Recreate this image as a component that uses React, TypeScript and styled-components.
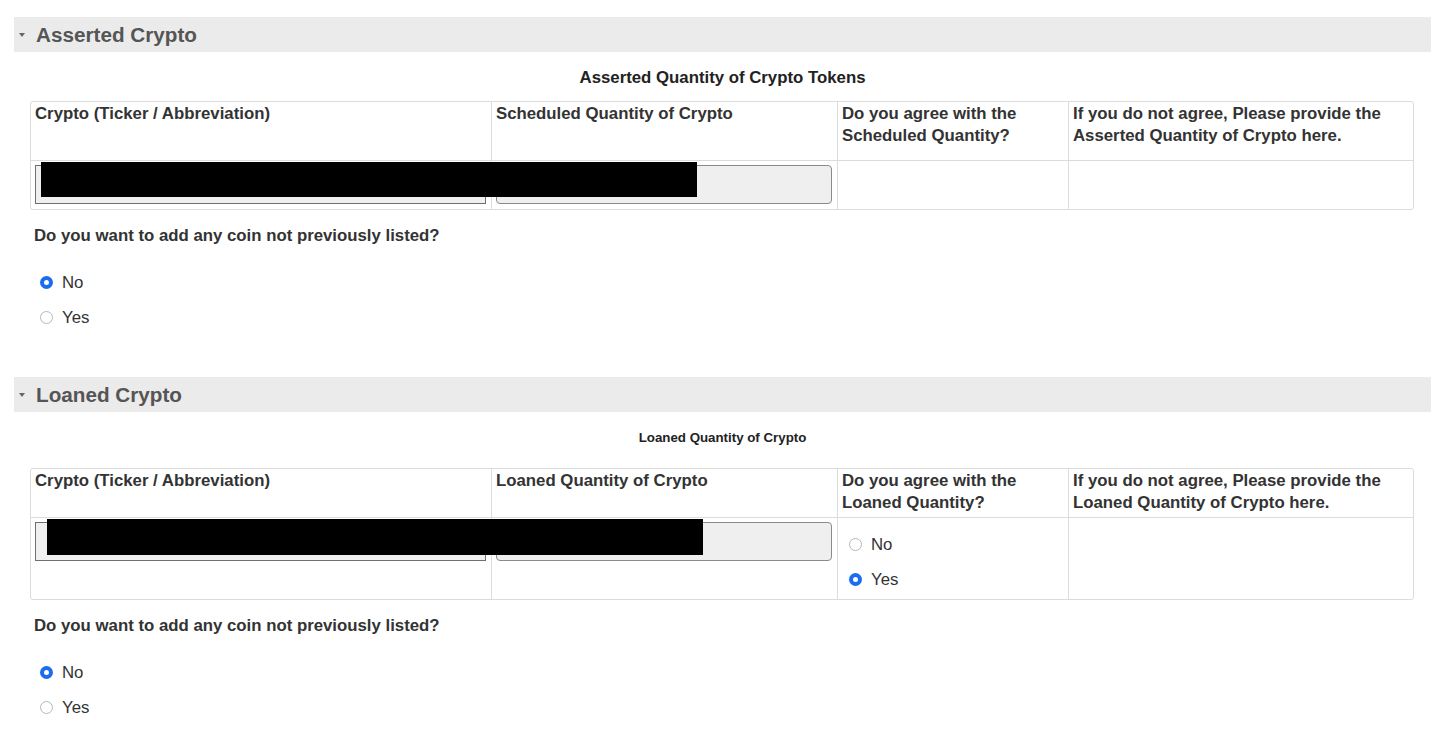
import React from "react";
import styled, { createGlobalStyle } from "styled-components";

const Global = createGlobalStyle`
  html, body { margin: 0; padding: 0; background: #fff; }
  body { font-family: "Liberation Sans", Arial, Helvetica, sans-serif; color: #333; }
  * { box-sizing: border-box; }
`;

const Page = styled.div`
  padding: 17px 11px 20px 14px;
  display: flex;
  flex-direction: column;
`;

const SectionHeader = styled.div<{ $top?: number }>`
  height: 35px;
  background: #ebebeb;
  display: flex;
  align-items: center;
  margin-top: ${(p) => p.$top ?? 0}px;
  padding-left: 5px;
`;

const Caret = styled.span`
  width: 0;
  height: 0;
  border-left: 3.5px solid transparent;
  border-right: 3.5px solid transparent;
  border-top: 4px solid #666;
  margin-right: 11px;
  margin-top: 1px;
`;

const HeaderTitle = styled.span`
  font-size: 20.7px;
  font-weight: 700;
  color: #555;
  line-height: 24px;
`;

const TableTitle = styled.div<{ $size: number; $mt: number; $mb: number }>`
  text-align: center;
  font-weight: 700;
  font-size: ${(p) => p.$size}px;
  line-height: ${(p) => Math.round(p.$size * 1.35)}px;
  color: #222;
  margin-top: ${(p) => p.$mt}px;
  margin-bottom: ${(p) => p.$mb}px;
`;

const Table = styled.div`
  margin: 0 17px 0 16px;
  border: 1px solid #dcdcdc;
  border-radius: 3px;
  display: grid;
  grid-template-columns: 461px 346px 231px 1fr;
`;

const HeadCell = styled.div<{ $h: number; $last?: boolean }>`
  height: ${(p) => p.$h}px;
  padding: 1px 5px 0 4px;
  font-size: 16.8px;
  line-height: 22px;
  font-weight: 700;
  color: #333;
  border-right: ${(p) => (p.$last ? "none" : "1px solid #dcdcdc")};
  border-bottom: 1px solid #dcdcdc;
`;

const BodyCell = styled.div<{ $h: number; $last?: boolean }>`
  position: relative;
  height: ${(p) => p.$h}px;
  padding: 4px 5px 0 4px;
  border-right: ${(p) => (p.$last ? "none" : "1px solid #dcdcdc")};
`;

const PlainInput = styled.div`
  height: 39px;
  width: 451px;
  border: 1px solid #6f6f6f;
  background: #f0f0f0;
`;

const RoundInput = styled.div`
  height: 39px;
  width: 336px;
  border: 1px solid #8a8a8a;
  border-radius: 4px;
  background: #efefef;
`;

const Redaction = styled.div<{ $left: number; $top: number; $h: number }>`
  position: absolute;
  left: ${(p) => p.$left}px;
  top: ${(p) => p.$top}px;
  width: 656px;
  height: ${(p) => p.$h}px;
  background: #000;
  z-index: 2;
`;

const Question = styled.div`
  margin: 15px 0 0 20px;
  font-size: 16.8px;
  line-height: 22px;
  font-weight: 700;
  color: #333;
`;

const RadioGroup = styled.div<{ $mt: number; $indent: number }>`
  margin-top: ${(p) => p.$mt}px;
  margin-left: ${(p) => p.$indent}px;
  display: flex;
  flex-direction: column;
`;

const RadioRow = styled.label`
  height: 35px;
  display: flex;
  align-items: center;
  font-size: 16.8px;
  color: #333;
`;

const RadioDot = styled.span<{ $checked?: boolean }>`
  width: 13px;
  height: 13px;
  border-radius: 50%;
  flex: none;
  margin-right: 9px;
  background: ${(p) => (p.$checked ? "#1c6cf0" : "#fff")};
  border: ${(p) => (p.$checked ? "none" : "1px solid #b8b8b8")};
  display: flex;
  align-items: center;
  justify-content: center;
  &::after {
    content: "";
    display: ${(p) => (p.$checked ? "block" : "none")};
    width: 5px;
    height: 5px;
    border-radius: 50%;
    background: #fff;
  }
`;

type RadioProps = { value: "No" | "Yes"; mt: number; indent: number };

const Radios: React.FC<RadioProps> = ({ value, mt, indent }) => (
  <RadioGroup $mt={mt} $indent={indent}>
    <RadioRow>
      <RadioDot $checked={value === "No"} />
      No
    </RadioRow>
    <RadioRow>
      <RadioDot $checked={value === "Yes"} />
      Yes
    </RadioRow>
  </RadioGroup>
);

export default function App() {
  return (
    <>
      <Global />
      <Page>
        <SectionHeader>
          <Caret />
          <HeaderTitle>Asserted Crypto</HeaderTitle>
        </SectionHeader>
        <TableTitle $size={16.8} $mt={14} $mb={12}>
          Asserted Quantity of Crypto Tokens
        </TableTitle>
        <Table>
          <HeadCell $h={59}>Crypto (Ticker / Abbreviation)</HeadCell>
          <HeadCell $h={59}>Scheduled Quantity of Crypto</HeadCell>
          <HeadCell $h={59}>
            Do you agree with the
            <br />
            Scheduled Quantity?
          </HeadCell>
          <HeadCell $h={59} $last>
            If you do not agree, Please provide the
            <br />
            Asserted Quantity of Crypto here.
          </HeadCell>
          <BodyCell $h={48}>
            <PlainInput />
            <Redaction $left={10} $top={1} $h={35} />
          </BodyCell>
          <BodyCell $h={48}>
            <RoundInput />
          </BodyCell>
          <BodyCell $h={48} />
          <BodyCell $h={48} $last />
        </Table>
        <Question>Do you want to add any coin not previously listed?</Question>
        <Radios value="No" mt={18} indent={26} />

        <SectionHeader $top={42}>
          <Caret />
          <HeaderTitle>Loaned Crypto</HeaderTitle>
        </SectionHeader>
        <TableTitle $size={13.3} $mt={17} $mb={21}>
          Loaned Quantity of Crypto
        </TableTitle>
        <Table>
          <HeadCell $h={49}>Crypto (Ticker / Abbreviation)</HeadCell>
          <HeadCell $h={49}>Loaned Quantity of Crypto</HeadCell>
          <HeadCell $h={49}>
            Do you agree with the
            <br />
            Loaned Quantity?
          </HeadCell>
          <HeadCell $h={49} $last>
            If you do not agree, Please provide the
            <br />
            Loaned Quantity of Crypto here.
          </HeadCell>
          <BodyCell $h={81}>
            <PlainInput />
            <Redaction $left={16} $top={1} $h={36} />
          </BodyCell>
          <BodyCell $h={81}>
            <RoundInput />
          </BodyCell>
          <BodyCell $h={81}>
            <Radios value="Yes" mt={5} indent={7} />
          </BodyCell>
          <BodyCell $h={81} $last />
        </Table>
        <Question>Do you want to add any coin not previously listed?</Question>
        <Radios value="No" mt={18} indent={26} />
      </Page>
    </>
  );
}
